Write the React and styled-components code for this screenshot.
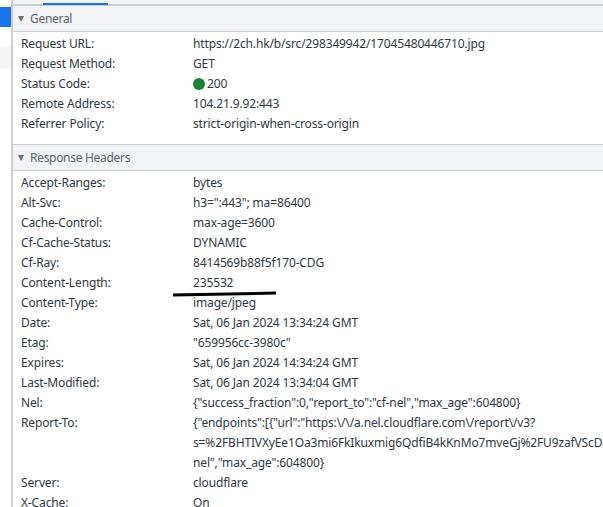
import React from "react";
import styled, { createGlobalStyle } from "styled-components";

const Global = createGlobalStyle`
  html, body { margin: 0; padding: 0; background: #fff; overflow: hidden; }
  #root { width: 603px; height: 507px; overflow: hidden; }
`;

const Page = styled.div`
  display: flex;
  width: 603px;
  height: 507px;
  overflow: hidden;
  font-family: "Noto Sans", "Open Sans", sans-serif;
  font-size: 12px;
  letter-spacing: -0.14px;
  color: #303942;
`;

const Sidebar = styled.div`
  flex: none;
  width: 11px;
  display: flex;
  flex-direction: column;
  padding-top: 7px;
`;

const SideRow = styled.div`
  height: ${(p) => p.$h}px;
  background: ${(p) => p.$bg};
`;

const Main = styled.div`
  flex: 1;
  min-width: 0;
  border-left: 2px solid #cbcdd1;
  display: flex;
  flex-direction: column;
`;

const Tabs = styled.div`
  flex: none;
  height: 4px;
  background: #f1f3f4;
  border-bottom: 2px solid #cbcdd1;
  padding-left: 30px;
`;

const TabLine = styled.div`
  width: 65px;
  height: 2px;
  margin-top: 3px;
  background: #1a73e8;
`;

const SectionHead = styled.div`
  flex: none;
  height: 25px;
  display: flex;
  align-items: center;
  gap: 6px;
  padding-left: 5px;
  background: #f1f3f4;
  border-bottom: 1px solid #cbcdd1;
  ${(p) => p.$top && "border-top: 1px solid #cbcdd1;"}
  color: #5f6368;
  letter-spacing: -0.3px;
`;

const Caret = styled.span`
  width: 0;
  height: 0;
  border-left: 3.5px solid transparent;
  border-right: 3.5px solid transparent;
  border-top: 6px solid #6e6e6e;
`;

const Body = styled.div`
  flex: none;
  padding: 2px 0 ${(p) => p.$pb}px 8px;
`;

const Row = styled.div`
  display: grid;
  grid-template-columns: 172px 1fr;
  line-height: 20px;
`;

const Key = styled.div`
  white-space: nowrap;
`;

const Val = styled.div`
  white-space: nowrap;
  display: flex;
  flex-direction: column;
`;

const Status = styled.span`
  display: flex;
  align-items: center;
  gap: 2px;
`;

const Dot = styled.span`
  width: 12px;
  height: 12px;
  border-radius: 50%;
  background: #188038;
`;

const Stroke = styled.svg`
  position: absolute;
  left: 170px;
  top: 290px;
`;

const general = [
  ["Request URL:", "https://2ch.hk/b/src/298349942/17045480446710.jpg"],
  ["Request Method:", "GET"],
  ["Status Code:", "200", true],
  ["Remote Address:", "104.21.9.92:443"],
  ["Referrer Policy:", "strict-origin-when-cross-origin"],
];

const response = [
  ["Accept-Ranges:", "bytes"],
  ["Alt-Svc:", 'h3=":443"; ma=86400'],
  ["Cache-Control:", "max-age=3600"],
  ["Cf-Cache-Status:", "DYNAMIC"],
  ["Cf-Ray:", "8414569b88f5f170-CDG"],
  ["Content-Length:", "235532"],
  ["Content-Type:", "image/jpeg"],
  ["Date:", "Sat, 06 Jan 2024 13:34:24 GMT"],
  ["Etag:", '"659956cc-3980c"'],
  ["Expires:", "Sat, 06 Jan 2024 14:34:24 GMT"],
  ["Last-Modified:", "Sat, 06 Jan 2024 13:34:04 GMT"],
  ["Nel:", '{"success_fraction":0,"report_to":"cf-nel","max_age":604800}'],
  [
    "Report-To:",
    [
      '{"endpoints":[{"url":"https:\\/\\/a.nel.cloudflare.com\\/report\\/v3?',
      "s=%2FBHTIVXyEe1Oa3mi6FkIkuxmig6QdfiB4kKnMo7mveGj%2FU9zafVScD2",
      'nel","max_age":604800}',
    ],
  ],
  ["Server:", "cloudflare"],
  ["X-Cache:", "On"],
];

const renderRow = ([k, v, status]) => (
  <Row key={k}>
    <Key>{k}</Key>
    <Val>
      {status ? (
        <Status>
          <Dot />
          {v}
        </Status>
      ) : Array.isArray(v) ? (
        v.map((l) => <span key={l}>{l}</span>)
      ) : (
        v
      )}
    </Val>
  </Row>
);

export default function App() {
  return (
    <Page>
      <Global />
      <Sidebar>
        <SideRow $h={20} $bg="#1a73e8" />
        <SideRow $h={20} $bg="#fff" />
        <SideRow $h={22} $bg="#f5f5f5" />
      </Sidebar>
      <Main>
        <Tabs>
          <TabLine />
        </Tabs>
        <SectionHead>
          <Caret />
          General
        </SectionHead>
        <Body $pb={10}>{general.map(renderRow)}</Body>
        <SectionHead $top>
          <Caret />
          Response Headers
        </SectionHead>
        <Body $pb={0}>{response.map(renderRow)}</Body>
      </Main>
      <Stroke width="110" height="10" viewBox="0 0 110 10">
        <path d="M3 5 L106 3" stroke="#000" strokeWidth="3" fill="none" />
      </Stroke>
    </Page>
  );
}
